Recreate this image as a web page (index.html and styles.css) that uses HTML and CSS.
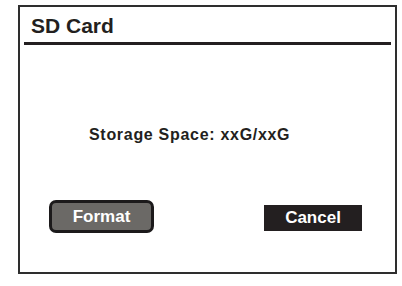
FILE: index.html
```html
<!DOCTYPE html>
<html>
<head>
<meta charset="utf-8">
<link rel="stylesheet" href="styles.css">
</head>
<body>
<div class="frame">
  <div class="header">SD Card</div>
  <div class="rule"></div>
  <div class="info">Storage Space: xxG/xxG</div>
  <div class="actions">
    <div class="btn btn-format">Format</div>
    <div class="btn btn-cancel">Cancel</div>
  </div>
</div>
</body>
</html>
```
FILE: styles.css
```css
html, body {
  margin: 0;
  padding: 0;
  background: #ffffff;
}
body {
  font-family: "Liberation Sans", Arial, sans-serif;
  color: #231f20;
}
.frame {
  margin: 5px 0 0 18px;
  width: 375px;
  height: 265px;
  border: 2px solid #2e2e2e;
  display: flex;
  flex-direction: column;
}
.header {
  font-size: 21px;
  font-weight: bold;
  line-height: 24px;
  padding: 7px 0 0 11px;
}
.rule {
  height: 3px;
  background: #231f20;
  margin: 4px 4px 0 4px;
}
.info {
  margin-top: 80px;
  padding-left: 69px;
  font-size: 16px;
  font-weight: bold;
  line-height: 20px;
  letter-spacing: 0.7px;
}
.actions {
  margin-top: 55px;
  display: flex;
  align-items: flex-start;
  padding-left: 29px;
}
.btn {
  color: #ffffff;
  font-size: 17px;
  font-weight: bold;
  text-align: center;
  box-sizing: border-box;
}
.btn-format {
  width: 105px;
  height: 33px;
  line-height: 27px;
  background: #6b6966;
  border: 3px solid #1c1a1b;
  border-radius: 7px;
}
.btn-cancel {
  margin-left: 110px;
  margin-top: 5px;
  width: 98px;
  height: 26px;
  line-height: 26px;
  background: #231f20;
}
```
